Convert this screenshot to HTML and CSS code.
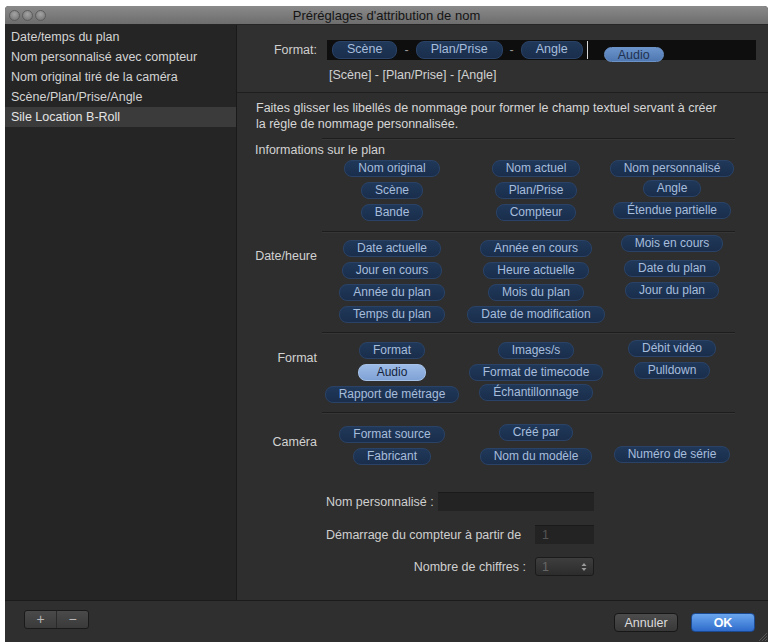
FILE: index.html
```html
<!DOCTYPE html>
<html lang="fr">
<head>
  <meta charset="UTF-8" />
  <title>Préréglages d'attribution de nom</title>
  <link rel="stylesheet" href="styles.css">
</head>
<body>

  <div class="window">
    <div class="titlebar">
      <div class="lights"><span></span><span></span><span></span></div>
      <div class="title">Préréglages d'attribution de nom</div>
    </div>

    <div class="main">
      <ul class="presets">
        <li>Date/temps du plan</li>
        <li>Nom personnalisé avec compteur</li>
        <li>Nom original tiré de la caméra</li>
        <li>Scène/Plan/Prise/Angle</li>
        <li class="selected">Sile Location B-Roll</li>
      </ul>

      <div class="editor">
        <div class="format-area">
          <div class="format-row">
            <div class="format-label">Format:</div>
            <div class="format-field">
              <span class="tok">Scène</span><span class="dash">-</span>
              <span class="tok">Plan/Prise</span><span class="dash">-</span>
              <span class="tok">Angle</span>
              <span class="caret"></span>
              <span class="tok drag">Audio</span>
            </div>
          </div>
          <div class="preview">[Scène] - [Plan/Prise] - [Angle]</div>
        </div>

        <div class="tokens-area">
          <p class="hint">Faites glisser les libellés de nommage pour former le champ textuel servant à créer<br>la règle de nommage personnalisée.</p>

          <div class="group info">
            <div class="group-title">Informations sur le plan</div>
            <div class="group-body">
              <div class="group-label"></div>
              <div class="tokens">
                <span class="tok">Nom original</span>
                <span class="tok">Nom actuel</span>
                <span class="tok">Nom personnalisé</span>
                <span class="tok">Scène</span>
                <span class="tok">Plan/Prise</span>
                <span class="tok up2">Angle</span>
                <span class="tok">Bande</span>
                <span class="tok">Compteur</span>
                <span class="tok up2">Étendue partielle</span>
              </div>
            </div>
          </div>

          <div class="group date">
            <div class="group-body">
              <div class="group-label">Date/heure</div>
              <div class="tokens">
                <span class="tok">Date actuelle</span>
                <span class="tok">Année en cours</span>
                <span class="tok up5">Mois en cours</span>
                <span class="tok">Jour en cours</span>
                <span class="tok">Heure actuelle</span>
                <span class="tok up2">Date du plan</span>
                <span class="tok">Année du plan</span>
                <span class="tok">Mois du plan</span>
                <span class="tok up2">Jour du plan</span>
                <span class="tok">Temps du plan</span>
                <span class="tok">Date de modification</span>
              </div>
            </div>
          </div>

          <div class="group fmt">
            <div class="group-body">
              <div class="group-label">Format</div>
              <div class="tokens">
                <span class="tok">Format</span>
                <span class="tok">Images/s</span>
                <span class="tok up2">Débit vidéo</span>
                <span class="tok active">Audio</span>
                <span class="tok">Format de timecode</span>
                <span class="tok up2">Pulldown</span>
                <span class="tok">Rapport de métrage</span>
                <span class="tok up2">Échantillonnage</span>
              </div>
            </div>
          </div>

          <div class="group cam">
            <div class="group-body">
              <div class="group-label">Caméra</div>
              <div class="tokens">
                <span class="tok">Format source</span>
                <span class="tok up2">Créé par</span>
                <span></span>
                <span class="tok">Fabricant</span>
                <span class="tok">Nom du modèle</span>
                <span class="tok up2">Numéro de série</span>
              </div>
            </div>
          </div>

          <div class="fields">
            <div class="field-row">
              <span class="field-label">Nom personnalisé :</span>
              <span class="input wide"></span>
            </div>
            <div class="field-grid">
              <span class="field-label">Démarrage du compteur à partir de</span>
              <span class="input small">1</span>
              <span class="field-label right">Nombre de chiffres :</span>
              <span class="select">1
                <svg width="6" height="10" viewBox="0 0 6 10"><path d="M0.5 4 L3 1 L5.5 4 Z M0.5 6 L3 9 L5.5 6 Z" fill="#9a9a9a"/></svg>
              </span>
            </div>
          </div>
        </div>
      </div>
    </div>

    <div class="footer">
      <div class="segmented">
        <span>+</span><span>−</span>
      </div>
      <div class="buttons">
        <button class="btn">Annuler</button>
        <button class="btn primary">OK</button>
      </div>
      <svg class="grip" width="10" height="10" viewBox="0 0 10 10">
        <path d="M10 2 L2 10 M10 5 L5 10 M10 8 L8 10" stroke="#555" stroke-width="1"/>
      </svg>
    </div>
  </div>

</body>
</html>
```

FILE: styles.css
```css
body {
  margin: 0;
  background: #fff;
  font-family: 'Liberation Sans', Arial, sans-serif;
  font-size: 12.5px;
}
.window {
  margin: 6px 0 0 5px;
  width: 763px;
  height: 636px;
  display: flex;
  flex-direction: column;
  background: #2f2f2f;
  border-radius: 4px 4px 0 0;
  overflow: hidden;
}

/* title bar */
.titlebar {
  height: 18px;
  flex: none;
  display: flex;
  align-items: center;
  background: linear-gradient(#8a8a8a, #6d6d6d);
  border-bottom: 1px solid #262626;
  position: relative;
}
.lights {
  display: flex;
  gap: 2px;
  margin-left: 4px;
}
.lights span {
  width: 11px;
  height: 11px;
  border-radius: 50%;
  background: radial-gradient(circle at 50% 35%, #a4a4a4, #6e6e6e);
  border: 1px solid #5c5c5c;
  box-sizing: border-box;
}
.title {
  position: absolute;
  left: 0;
  right: 0;
  text-align: center;
  font-size: 13px;
  color: #141414;
}

.main {
  flex: 1;
  display: flex;
  min-height: 0;
  border-bottom: 1px solid #1b1b1b;
}

/* left list */
.presets {
  list-style: none;
  margin: 0;
  padding: 2px 0 0;
  width: 231px;
  flex: none;
  background: #252525;
  border-right: 1px solid #1a1a1a;
}
.presets li {
  height: 20px;
  line-height: 20px;
  padding-left: 6px;
  color: #d4d4d4;
}
.presets li.selected {
  background: #3b3b3b;
  color: #e4e4e4;
}

/* right side */
.editor {
  flex: 1;
  display: flex;
  flex-direction: column;
  background: #303030;
}
.format-area {
  padding: 15px 0 9px;
  border-bottom: 1px solid #1e1e1e;
  box-shadow: 0 1px 0 #3a3a3a;
}
.format-row {
  display: flex;
  align-items: center;
}
.format-label {
  width: 80px;
  text-align: right;
  color: #cfcfcf;
  margin-right: 10px;
}
.format-field {
  width: 424px;
  height: 20px;
  padding-left: 5px;
  background: #0e0e0e;
  display: flex;
  align-items: center;
}
.format-field .tok {
  height: 16px;
  line-height: 15px;
  padding: 0 14px;
  font-size: 12.5px;
}
.dash {
  color: #9a9a9a;
  margin: 0 7px;
}
.caret {
  width: 1px;
  height: 18px;
  background: #d8d8d8;
  margin: 0 16px 0 4px;
}
.format-field .tok.drag {
  align-self: flex-start;
  margin-top: 7px;
  height: 13px;
  line-height: 14px;
  padding: 0 13px;
  background: linear-gradient(#6b93cb, #4f78b2);
  border-color: #6c93c8;
  color: #1f3250;
}
.preview {
  margin-top: 8px;
  padding-left: 92px;
  line-height: 15px;
  color: #d2d2d2;
}

.tokens-area {
  flex: 1;
  background: #2e2e2e;
}
.hint {
  margin: 0 0 6px;
  padding: 7px 0 0 19px;
  line-height: 16px;
  color: #d6d6d6;
}

/* token groups */
.group::before {
  content: "";
  display: block;
  height: 1px;
  margin: 0 33px 0 85px;
  background: #1d1d1d;
  box-shadow: 0 1px 0 #363636;
}
.group-title {
  margin-top: 4px;
  padding-left: 18px;
  line-height: 14px;
  color: #d2d2d2;
}
.group-body {
  display: flex;
}
.group-label {
  width: 80px;
  margin-top: 12px;
  line-height: 15px;
  text-align: right;
  color: #d2d2d2;
  flex: none;
}
.tokens {
  margin-left: 4px;
  display: grid;
  grid-template-columns: 142px 146px 126px;
  grid-auto-rows: 22px;
  align-items: center;
  justify-items: center;
}
.info .group-label { margin: 0; }
.info .group-body { padding-bottom: 8px; }
.date .group-body { padding: 5px 0 7px; }
.fmt .group-body { padding: 6px 0 7px; }
.cam .group-body { padding-top: 10px; }

.tok {
  display: inline-block;
  height: 15px;
  line-height: 15px;
  padding: 0 13px;
  border-radius: 8px;
  background: linear-gradient(#203859, #1a2e4c);
  border: 1px solid #2a4266;
  color: #a7bddc;
  font-size: 12px;
  white-space: nowrap;
}
.tok.active {
  padding: 0 18px;
  background: linear-gradient(#9dbbe6, #7fa2d6);
  border-color: #a7c2e8;
  color: #15243c;
}
.tok.up2 { position: relative; top: -2px; }
.tok.up5 { position: relative; top: -5px; }

/* fields */
.fields {
  margin-top: 25px;
  padding-left: 89px;
  color: #d0d0d0;
}
.field-row {
  display: flex;
  align-items: center;
  gap: 4px;
}
.input {
  height: 19px;
  line-height: 19px;
  background: #232323;
  border-top: 1px solid #1a1a1a;
  box-sizing: border-box;
  color: #555;
}
.input.wide { width: 156px; }
.input.small { width: 59px; padding-left: 7px; }
.field-grid {
  margin-top: 14px;
  display: grid;
  grid-template-columns: 209px 59px;
  row-gap: 13px;
  align-items: center;
}
.field-label.right {
  text-align: right;
  padding-right: 9px;
}
.select {
  height: 19px;
  box-sizing: border-box;
  padding: 0 6px;
  display: flex;
  align-items: center;
  justify-content: space-between;
  background: linear-gradient(#3e3e3e, #2c2c2c);
  border: 1px solid #1b1b1b;
  border-radius: 3px;
  color: #666;
}

/* bottom bar */
.footer {
  height: 41px;
  flex: none;
  display: flex;
  justify-content: space-between;
  align-items: flex-start;
  padding: 0 13px 0 19px;
  background: #2f2f2f;
  position: relative;
}
.segmented {
  margin-top: 9px;
  display: flex;
  border: 1px solid #1a1a1a;
  border-radius: 3px;
  background: linear-gradient(#4a4a4a, #3a3a3a);
}
.segmented span {
  width: 31px;
  height: 17px;
  line-height: 17px;
  text-align: center;
  color: #b8b8b8;
  font-size: 14px;
}
.segmented span + span {
  border-left: 1px solid #2a2a2a;
}
.buttons {
  margin-top: 12px;
  display: flex;
  gap: 13px;
}
.btn {
  width: 64px;
  height: 19px;
  padding: 0;
  font-family: 'Liberation Sans', Arial, sans-serif;
  font-size: 12.5px;
  color: #dcdcdc;
  background: linear-gradient(#4c4c4c, #383838);
  border: 1px solid #171717;
  border-radius: 4px;
}
.btn.primary {
  color: #fff;
  font-weight: bold;
  background: linear-gradient(#6aa6ee, #2f6ccc);
  border-color: #1c4a92;
}
.grip {
  position: absolute;
  right: 1px;
  bottom: 1px;
}
```
